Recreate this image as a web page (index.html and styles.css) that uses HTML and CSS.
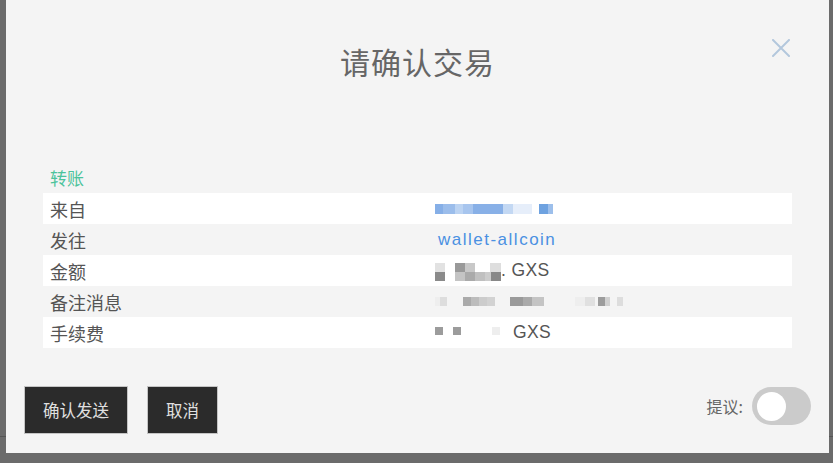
FILE: index.html
```html
<!DOCTYPE html>
<html lang="zh-CN">
<head>
<meta charset="utf-8">
<title>请确认交易</title>
<link rel="stylesheet" href="styles.css">
</head>
<body>
<div class="modal">
  <header class="modal-header">
    <h1 class="modal-title">请确认交易</h1>
    <button class="close-btn" aria-label="关闭">
      <svg width="18" height="18" viewBox="0 0 18 18"><path d="M1 1 L17 17 M17 1 L1 17" stroke="#b3c7dc" stroke-width="2" fill="none" stroke-linecap="round"/></svg>
    </button>
  </header>
  <section class="modal-body">
    <div class="op-title">转账</div>
    <div class="rows">
      <div class="row odd"><span class="label">来自</span><span class="value"><span class="mask mask-from"></span></span></div>
      <div class="row"><span class="label">发往</span><span class="value"><a class="link">wallet-allcoin</a></span></div>
      <div class="row odd"><span class="label">金额</span><span class="value"><span class="mask mask-amount"></span><span class="unit">. GXS</span></span></div>
      <div class="row"><span class="label">备注消息</span><span class="value"><span class="mask mask-memo"></span></span></div>
      <div class="row odd"><span class="label">手续费</span><span class="value"><span class="mask mask-fee"></span><span class="unit">GXS</span></span></div>
    </div>
  </section>
  <footer class="modal-footer">
    <div class="actions">
      <button class="btn">确认发送</button>
      <button class="btn">取消</button>
    </div>
    <div class="propose">
      <span class="propose-label">提议:</span>
      <span class="toggle"><span class="knob"></span></span>
    </div>
  </footer>
</div>
</body>
</html>
```
FILE: styles.css
```css
* { box-sizing: border-box; }
html, body { margin: 0; padding: 0; }
body {
  width: 833px;
  height: 463px;
  overflow: hidden;
  background: linear-gradient(to bottom, transparent 436px, #555 436px, #555 437px, transparent 437px), #6b6b6b;
  font-family: "Liberation Sans", "Noto Sans CJK SC", sans-serif;
}
.modal {
  position: relative;
  margin-left: 6px;
  width: 823px;
  height: 453px;
  background: #f4f4f4;
  display: flex;
  flex-direction: column;
}
.modal-header {
  padding-top: 41px;
  text-align: center;
}
.modal-title {
  margin: 0;
  font-family: "Noto Sans CJK SC", sans-serif;
  font-weight: 400;
  font-size: 30px;
  line-height: 40px;
  color: #666;
  letter-spacing: 1px;
}
.close-btn {
  position: absolute;
  top: 39px;
  left: 766px;
  width: 18px;
  height: 18px;
  padding: 0;
  border: 0;
  background: transparent;
  display: flex;
}
.modal-body {
  margin-top: 88px;
  padding: 0 37px;
}
.op-title {
  height: 24px;
  line-height: 18px;
  padding-left: 7px;
  font-family: "Noto Sans CJK SC", sans-serif;
  font-size: 17px;
  color: #4cc39b;
}
.rows { display: flex; flex-direction: column; }
.row {
  display: grid;
  grid-template-columns: 392px 1fr;
  height: 31px;
  align-items: center;
  font-size: 18px;
  color: #555;
}
.row.odd { background: #fff; }
.label {
  padding-left: 7px;
  font-family: "Noto Sans CJK SC", sans-serif;
  font-size: 18px;
  color: #555;
}
.value {
  display: flex;
  align-items: center;
}
.link {
  color: #4a90e2;
  font-size: 17px;
  letter-spacing: 1.5px;
  margin-left: 3px;
}
.unit {
  font-size: 17.5px;
  letter-spacing: 0.4px;
  color: #555;
}
.mask { display: inline-block; }
.mask-from {
  width: 118px;
  height: 10px;
  background: linear-gradient(to right,
    #86afe7 0 8px, #9bbdeb 8px 20px, #bbd3f2 20px 28px, #a7c5ee 28px 38px,
    #88b0e7 38px 68px, #c3d8f3 68px 78px, #e6eefa 78px 97px, transparent 97px 104px,
    #6ea2e0 104px 113px, #9dbfeb 113px 118px);
}
.mask-amount {
  width: 66px;
  height: 18px;
  margin-top: 2px;
  background:
    linear-gradient(to right, #e2e2e2 0 10px, transparent 10px 20px, #999 20px 30px, #c8c8c8 30px 40px, transparent 40px 55px, #dedede 55px 66px) top / 100% 50% no-repeat,
    linear-gradient(to right, #8a8a8a 0 10px, transparent 10px 20px, #c4c4c4 20px 30px, #aaa 30px 40px, #c0c0c0 40px 50px, #ccc 50px 56px, #888 56px 66px) bottom / 100% 50% no-repeat;
}
.mask-memo {
  width: 200px;
  height: 9px;
  background: linear-gradient(to right,
    #eee 0 5px, #ddd 5px 12px, transparent 12px 28px, #aaa 28px 36px, #bcbcbc 36px 44px,
    #ccc 44px 52px, #d2d2d2 52px 60px, transparent 60px 75px, #9a9a9a 75px 88px,
    #aaa 88px 97px, #c4c4c4 97px 109px, transparent 109px 140px, #eee 140px 150px,
    #e0e0e0 150px 160px, transparent 160px 163px, #9c9c9c 163px 170px, #d0d0d0 170px 175px,
    transparent 175px 182px, #ddd 182px 188px, transparent 188px 200px);
}
.mask-fee {
  width: 78px;
  height: 8px;
  margin-top: -4px;
  background: linear-gradient(to right,
    #9c9c9c 0 8px, transparent 8px 18px, #9c9c9c 18px 26px, transparent 26px 57px,
    #eee 57px 65px, transparent 65px 78px);
}
.modal-footer {
  margin-top: 38px;
  padding: 0 18px;
  display: flex;
  justify-content: space-between;
  align-items: center;
}
.actions { display: flex; gap: 19px; }
.btn {
  height: 48px;
  padding: 0 18px;
  background: #2b2b2b;
  border: 1px solid #c4c4c4;
  color: #e0e0e0;
  font-family: "Noto Sans CJK SC", sans-serif;
  font-size: 16.5px;
}
.propose {
  display: flex;
  align-items: center;
  gap: 9px;
  margin-bottom: 8px;
}
.propose-label {
  font-family: "Noto Sans CJK SC", sans-serif;
  font-size: 16px;
  color: #666;
}
.toggle {
  width: 59px;
  height: 38px;
  border-radius: 19px;
  background: #cbcbcb;
  display: flex;
  align-items: center;
  padding-left: 5px;
}
.knob {
  width: 29px;
  height: 29px;
  border-radius: 50%;
  background: #fff;
}
```
